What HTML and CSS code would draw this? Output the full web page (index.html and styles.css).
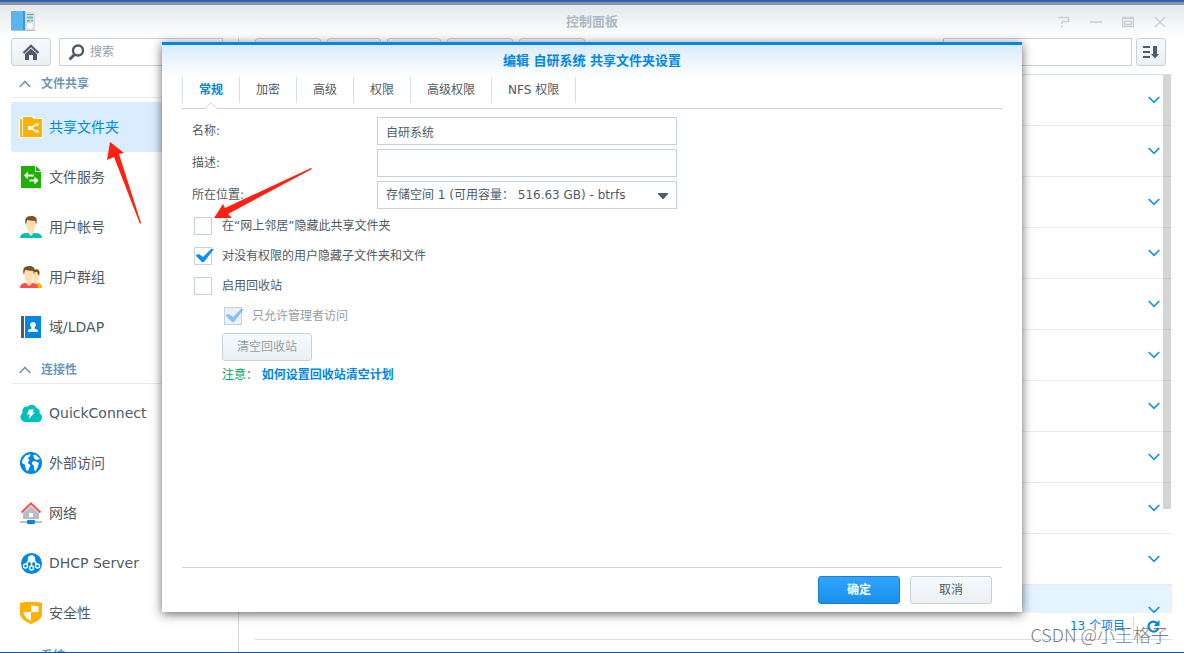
FILE: index.html
```html
<!DOCTYPE html>
<html lang="zh-CN">
<head>
<meta charset="utf-8">
<title>控制面板</title>
<link rel="stylesheet" href="styles.css">
</head>
<body>
<div class="window">
  <header class="titlebar">
    <svg class="app-icon" width="24" height="21" viewBox="0 0 24 21"><path d="M0 0h14v19H0z" fill="#5cb5ee"/><path d="M12 0h2v19h-2z" fill="#3a98e0"/><path d="M14 1h10v18H14z" fill="#d5dde3"/><path d="M0 19h24v1H1z" fill="#b4c1cc"/><path d="M2 5h1M5 5h6M2 10h1M5 10h6M2 15h1M5 15h6" stroke="#43c0ef"/><path d="M16 3.500h6" stroke="#8a98a5"/><path d="M16 6.500h6" stroke="#56c4d9" stroke-width="2"/><path d="M16 10h3" stroke="#85d536" stroke-width="2"/><path d="M20 9.500h2" stroke="#8a98a5"/><circle cx="19" cy="15" r="3" fill="#fff"/></svg>
    <h1 class="title">控制面板</h1>
    <div class="controls">
      <button class="control" aria-label="帮助"><svg width="12" height="12" viewBox="0 0 12 12"><path d="M0 1.500h10.500v4H4V8M3 10.500h2"/></svg></button>
      <button class="control" aria-label="最小化"><svg width="12" height="12" viewBox="0 0 12 12"><path d="M0 6h12"/></svg></button>
      <button class="control" aria-label="最大化"><svg width="12" height="12" viewBox="0 0 12 12"><path d="M.5 1.500h11v9H.5zM0 2.500h12M2.500 5.500h7v3h-7z"/></svg></button>
      <button class="control" aria-label="关闭"><svg width="12" height="12" viewBox="0 0 12 12"><path d="M1 1l10 10M11 1L1 11"/></svg></button>
    </div>
  </header>

  <div class="body">
    <nav class="sidebar">
      <div class="search-row">
        <button class="btn home" aria-label="主页"><svg width="18" height="17" viewBox="0 0 18 17"><path d="M1.500 9L9 1.800 16.500 9" fill="none" stroke="#4f5b69" stroke-width="2.200"/><path d="M3 10l6-5.500L15 10v6h-4v-5H7v5H3z" fill="#4f5b69"/></svg></button>
        <label class="search"><svg width="17" height="17" viewBox="0 0 17 17" fill="none" stroke="#4f5b69"><circle cx="10" cy="6.500" r="5" stroke-width="2.400"/><path d="M6.500 10.500L1.500 15.500" stroke-width="3"/></svg><input type="text" placeholder="搜索" aria-label="搜索"></label>
      </div>

      <h2 class="group"><svg width="12" height="8" viewBox="0 0 12 8"><path d="M.7 7L6 1.500 11.300 7"/></svg>文件共享</h2>
      <a class="item active" href="#"><svg width="24" height="22" viewBox="-1 0 24 22"><path d="M-1 2h3V0h11l2 2h8v20H-1z" fill="#fff"/><path d="M0 3h2v16h18v2H0z" fill="#ffb000"/><path d="M2 2h1v18H2z" fill="#fff"/><path d="M3 1h9l2 2h8v18H3z" fill="#ffb000"/><path d="M17 8.500l-7 3.500 7 3.500" fill="none" stroke="#fff" stroke-width="1.500"/><circle cx="10" cy="12" r="2.300" fill="#fff"/><circle cx="17" cy="8.500" r="1.800" fill="#fff"/><circle cx="17" cy="15.500" r="1.800" fill="#fff"/></svg>共享文件夹</a>
      <a class="item" href="#"><svg width="22" height="22" viewBox="0 0 22 22"><path d="M1 0h14v6h6v16H1z" fill="#1db100"/><path d="M16 0l5 5h-5z" fill="#1db100"/><path d="M4 9.500l4-4v3h6v2H8v3zM18.500 14.500l-4-4v3h-5v2h5v3z" fill="#fff"/></svg>文件服务</a>
      <a class="item" href="#"><svg width="22" height="22" viewBox="0 0 22 22"><path d="M0 22c0-4 4-5 7-5h8c3 0 7 1 7 5z" fill="#00bfbf"/><path d="M6.500 4h9v5c0 4-1 5-2 6v2.500L11 20l-2.500-2.500V15c-1-1-2-2-2-6z" fill="#ffdfb2"/><path d="M6 9C4 3 6 0 11 0s7 2 5 9l-.8-4C11 5 9 4 7 4z" fill="#7a5228"/></svg>用户帐号</a>
      <a class="item" href="#"><svg width="22" height="22" viewBox="0 0 22 22"><path d="M12 22v-3l7-2c2 1 3 2 3 5z" fill="#ffb000"/><path d="M14 6h5v6c0 2-1 3-2 3v3l-3-1z" fill="#ffdfb2"/><path d="M13 4c5-2 8 0 6 6l-2-4h-3z" fill="#7a5228"/><path d="M0 22c0-4 3-5 6-5h6c3 0 6 1 6 5z" fill="#ff4d4d"/><path d="M4.500 4h9v5c0 4-1 5-2 6v3L9 20l-2.500-2v-3c-1-1-2-2-2-6z" fill="#ffdfb2"/><path d="M4 9C2 3 4 0 9 0s7 2 5 9l-.8-4C9 5 7 4 5 4z" fill="#7a5228"/></svg>用户群组</a>
      <a class="item" href="#"><svg width="22" height="22" viewBox="0 0 22 22"><path d="M1 0h3v22H1z" fill="#4f5b69"/><path d="M5 0h16v22H5z" fill="#0086e5"/><path d="M8 16v-2l3.500-1.500v-1C9.500 10 9.500 6 13 6s3.500 4 1.500 5.500v1L18 14v2z" fill="#fff"/></svg>域/LDAP</a>

      <h2 class="group"><svg width="12" height="8" viewBox="0 0 12 8"><path d="M.7 7L6 1.500 11.300 7"/></svg>连接性</h2>
      <a class="item" href="#"><svg width="22" height="22" viewBox="0 0 22 22"><path d="M5 20a5 5 0 0 1-2.500-9A5 5 0 0 1 8 4.500a5 5 0 0 1 8.500 1.500 4 4 0 0 1 3 5A4.800 4.800 0 0 1 17 20z" fill="#00bfbf"/><path d="M9 7.500h5l-1.500 3H15L8.500 17l1.500-4.500H7z" fill="#fff"/></svg>QuickConnect</a>
      <a class="item" href="#"><svg width="22" height="22" viewBox="0 0 22 22"><circle cx="11" cy="11" r="11" fill="#0086e5"/><path d="M2.500 8l3-4.500 5-1.500-1 3-2 1 2 2-2 3 3 2-2.500 6-2-1-1-5-3-2zM13 3l3 0 4 4-4 1-2-2zM12 10l3-1 4 2-1 3-2 5-2-1 0-4-2-2z" fill="#fff"/></svg>外部访问</a>
      <a class="item" href="#"><svg width="22" height="22" viewBox="0 0 22 22"><path d="M3 11l8-7 8 7v6H3z" fill="#b3bfcc"/><path d="M9 11h4v4H9z" fill="#fff"/><path d="M1.500 10.500L11 1.500l9.500 9" fill="none" stroke="#ff4d4d" stroke-width="2"/><path d="M0 19h22v2H0z" fill="#b3bfcc"/><rect x="7" y="18" width="8" height="4" rx="1" fill="#0086e5"/></svg>网络</a>
      <a class="item" href="#"><svg width="22" height="22" viewBox="0 0 22 22"><circle cx="11.500" cy="11.500" r="10.500" fill="#0086e5"/><circle cx="11.500" cy="7" r="3.800" fill="#fff"/><path d="M9 8l-3 5M11.500 8v6M14 8l3 5" stroke="#fff" stroke-width="1.500"/><g fill="#0086e5" stroke="#fff" stroke-width="1.400"><circle cx="5.500" cy="14" r="2"/><circle cx="11.500" cy="16" r="2"/><circle cx="17.500" cy="14" r="2"/></g></svg>DHCP Server</a>
      <a class="item" href="#"><svg width="22" height="22" viewBox="0 0 22 22"><path d="M0 1c7-1.500 15-1.500 22 0v11c0 5-6 8-11 10C6 20 1 17 0 12z" fill="#ffb000"/><path d="M11 3.500c3 0 5 .3 7.500.7V10H11zM11 10v8.500C7 17 4 14.500 3.500 10z" fill="#fff"/></svg>安全性</a>
      <h2 class="group"><svg width="12" height="8" viewBox="0 0 12 8"><path d="M.7 7L6 1.500 11.300 7"/></svg>系统</h2>
    </nav>

    <main class="main">
      <div class="toolbar">
        <button class="btn wide" aria-label="新增"></button>
        <button class="btn" aria-label="编辑"></button>
        <button class="btn" aria-label="删除"></button>
        <button class="btn wide" aria-label="加密"></button>
        <button class="btn wide" aria-label="操作"></button>
        <input class="filter" type="text" aria-label="筛选">
        <button class="btn sort" aria-label="排序"><svg width="16" height="13" viewBox="0 0 16 13"><path d="M0 1h7M0 6h7M0 11h7" stroke="#4f5b69" stroke-width="2"/><path d="M10 0h4v8h2l-4 4.500L8 8h2z" fill="#4f5b69"/></svg></button>
      </div>
      <div class="list">
        <button class="row" aria-label="展开"><svg class="chev" width="12" height="8" viewBox="0 0 12 8"><path d="M.7 1L6 6.300 11.300 1"/></svg></button>
        <button class="row" aria-label="展开"><svg class="chev" width="12" height="8" viewBox="0 0 12 8"><path d="M.7 1L6 6.300 11.300 1"/></svg></button>
        <button class="row" aria-label="展开"><svg class="chev" width="12" height="8" viewBox="0 0 12 8"><path d="M.7 1L6 6.300 11.300 1"/></svg></button>
        <button class="row" aria-label="展开"><svg class="chev" width="12" height="8" viewBox="0 0 12 8"><path d="M.7 1L6 6.300 11.300 1"/></svg></button>
        <button class="row" aria-label="展开"><svg class="chev" width="12" height="8" viewBox="0 0 12 8"><path d="M.7 1L6 6.300 11.300 1"/></svg></button>
        <button class="row" aria-label="展开"><svg class="chev" width="12" height="8" viewBox="0 0 12 8"><path d="M.7 1L6 6.300 11.300 1"/></svg></button>
        <button class="row" aria-label="展开"><svg class="chev" width="12" height="8" viewBox="0 0 12 8"><path d="M.7 1L6 6.300 11.300 1"/></svg></button>
        <button class="row" aria-label="展开"><svg class="chev" width="12" height="8" viewBox="0 0 12 8"><path d="M.7 1L6 6.300 11.300 1"/></svg></button>
        <button class="row" aria-label="展开"><svg class="chev" width="12" height="8" viewBox="0 0 12 8"><path d="M.7 1L6 6.300 11.300 1"/></svg></button>
        <button class="row" aria-label="展开"><svg class="chev" width="12" height="8" viewBox="0 0 12 8"><path d="M.7 1L6 6.300 11.300 1"/></svg></button>
        <button class="row selected" aria-label="展开"><svg class="chev" width="12" height="8" viewBox="0 0 12 8"><path d="M.7 1L6 6.300 11.300 1"/></svg></button>
        <div class="scrollbar"></div>
      </div>
      <footer class="status">
        <span class="count">13 个项目</span>
        <button class="refresh" aria-label="刷新"><svg width="13" height="13" viewBox="0 0 13 13"><path d="M10.500 3.500A5 5 0 1 0 11.300 8" fill="none" stroke="#0086e5" stroke-width="2.200"/><path d="M12.500 0v6h-6z" fill="#0086e5"/></svg></button>
      </footer>
    </main>
  </div>
</div>

<div class="overlay">
  <form class="modal" role="dialog" aria-labelledby="modal-title">
    <h2 class="modal-title" id="modal-title">编辑 自研系统 共享文件夹设置</h2>
    <div class="tabs" role="tablist">
      <button type="button" role="tab" class="tab current">常规<svg class="notch" width="14" height="8" viewBox="0 0 14 8"><path d="M0 7L1 6.500 7 .8l6 5.700 1 .5v1H0z" fill="#fff"/><path d="M0 6.500h1L7 .8l6 5.700h1" fill="none" stroke="#cdd0d3"/></svg></button>
      <button type="button" role="tab" class="tab">加密</button>
      <button type="button" role="tab" class="tab">高级</button>
      <button type="button" role="tab" class="tab">权限</button>
      <button type="button" role="tab" class="tab">高级权限</button>
      <button type="button" role="tab" class="tab">NFS 权限</button>
    </div>
    <div class="form">
      <div class="fields">
        <label for="name">名称:</label>
        <input class="field" id="name" type="text" value="自研系统">
        <label for="desc">描述:</label>
        <input class="field" id="desc" type="text">
        <label for="place">所在位置:</label>
        <div class="select">
          <select class="field" id="place"><option>存储空间 1 (可用容量： 516.63 GB) - btrfs</option></select>
          <svg class="caret" width="10" height="6" viewBox="0 0 10 6"><path d="M0 0h10v1L5.500 6h-1L0 1z" fill="#4f5b69"/></svg>
        </div>
      </div>
      <label class="check"><input type="checkbox"><span>在“网上邻居”隐藏此共享文件夹</span></label>
      <label class="check"><input type="checkbox" checked><span>对没有权限的用户隐藏子文件夹和文件</span></label>
      <label class="check"><input type="checkbox"><span>启用回收站</span></label>
      <label class="check nested"><input type="checkbox" checked disabled><span>只允许管理者访问</span></label>
      <button class="btn empty" type="button" disabled>清空回收站</button>
      <p class="note">注意： <a href="#">如何设置回收站清空计划</a></p>
    </div>
    <div class="actions">
      <button class="btn action primary" type="button">确定</button>
      <button class="btn action" type="button">取消</button>
    </div>
  </form>
</div>

<svg class="arrow arrow-item" width="36" height="84" viewBox="0 0 36 84"><path d="M4 0L18 11l-5 1 22 69-1 1L8 15l-7 3z" fill="#ff2010"/></svg>
<svg class="arrow arrow-check" width="100" height="52" viewBox="0 0 100 52"><path d="M0 50L9 36l2 4L97 0l1 1-84 45 4 4z" fill="#ff2010"/></svg>
<div class="watermark">CSDN @小王格子</div>
</body>
</html>
```

FILE: styles.css
```css
* {
  box-sizing: border-box;
}

body {
  margin: 0;
  height: 100vh;
  position: relative;
  overflow: hidden;
  background: #fff;
  color: #505a64;
  font: 12px/18px "DejaVu Sans", "Noto Sans CJK SC", sans-serif;
}

h1,
h2,
p {
  margin: 0;
}

button,
input,
select {
  font: inherit;
  color: inherit;
}

button {
  padding: 0;
}

svg {
  display: block;
  flex: none;
}

.window {
  height: 100%;
  display: flex;
  flex-direction: column;
  border-top: 2px solid #2a62b8;
  border-bottom: 1px solid #1d4f94;
}

.titlebar {
  flex: none;
  height: 36px;
  display: grid;
  grid-template-columns: 1fr auto 1fr;
  align-items: center;
  padding: 0 11px;
  border-top: 3px solid #8b949e;
  background: linear-gradient(#e4e8ed, #fff);
}

.title {
  font-size: 13px;
  line-height: 20px;
  color: #b0b9c2;
}

.controls {
  display: flex;
  justify-content: flex-end;
  gap: 20px;
  padding-right: 7px;
}

.control {
  border: 0;
  background: none;
}

.control path {
  fill: none;
  stroke: #cbd0d5;
  stroke-width: 1.4;
}

.body {
  flex: 1;
  min-height: 0;
  display: flex;
}

.sidebar {
  width: 239px;
  flex: none;
  overflow: hidden;
  padding-left: 11px;
  border-right: 1px solid #d5d8db;
}

.search-row {
  display: flex;
  gap: 8px;
  padding-right: 15px;
}

.btn {
  width: 54px;
  height: 28px;
  flex: none;
  display: flex;
  align-items: center;
  justify-content: center;
  border: 1px solid #c6d1dc;
  border-radius: 3px;
  background: linear-gradient(#f5faff, #ebf0f5);
}

.btn.home {
  width: 40px;
}

.btn.wide {
  width: 66px;
}

.search {
  flex: 1;
  display: flex;
  align-items: center;
  gap: 5px;
  height: 28px;
  padding-left: 8px;
  border: 1px solid #c6d1dc;
}

.search input {
  min-width: 0;
  width: 100%;
  padding: 0;
  border: 0;
  background: none;
}

.search input::placeholder {
  color: #96a0ab;
}

.group {
  display: flex;
  align-items: center;
  gap: 10px;
  height: 32px;
  margin-bottom: 4px;
  padding: 5px 0 0 8px;
  border-bottom: 1px solid #e6eaed;
  font-size: 12px;
  line-height: 18px;
  color: #6e98b8;
}

.group path {
  fill: none;
  stroke: #6e98b8;
  stroke-width: 1.6;
}

.item {
  display: flex;
  align-items: center;
  gap: 7px;
  height: 50px;
  padding-left: 9px;
  border-radius: 3px 0 0 3px;
  font-size: 14px;
  color: #505a64;
  text-decoration: none;
}

.item.active {
  gap: 6px;
  padding-left: 8px;
  background: #d9edff;
  color: #0086e5;
}

.main {
  flex: 1;
  min-width: 0;
  display: flex;
  flex-direction: column;
  padding: 0 12px 12px 16px;
}

.toolbar {
  flex: none;
  display: flex;
  gap: 6px;
  height: 36px;
  padding-right: 6px;
}

.filter {
  width: 189px;
  height: 28px;
  margin-left: auto;
  margin-right: -2px;
  border: 1px solid #c6d1dc;
}

.btn.sort {
  width: 30px;
}

.list {
  flex: 1;
  min-height: 0;
  position: relative;
  overflow: hidden;
  border-top: 1px solid #d5e0ea;
}

.row {
  display: flex;
  align-items: center;
  justify-content: flex-end;
  width: 100%;
  height: 51px;
  padding-right: 12px;
  border: 0;
  border-bottom: 1px solid #e8ecf0;
  background: #fff;
}

.row.selected {
  background: #e6f4ff;
}

.chev path {
  fill: none;
  stroke: #1791ea;
  stroke-width: 1.7;
}

.scrollbar {
  position: absolute;
  top: 0;
  right: 1px;
  width: 8px;
  height: 434px;
  background: rgba(60, 65, 75, 0.22);
}

.status {
  flex: none;
  display: flex;
  align-items: center;
  justify-content: flex-end;
  height: 27px;
  padding-right: 12px;
  border-bottom: 1px solid #d5e0ea;
  color: #0086e5;
}

.count {
  padding-right: 8px;
  border-right: 1px solid #d5e0ea;
}

.refresh {
  margin-left: 13px;
  border: 0;
  background: none;
}

.overlay {
  position: absolute;
  inset: 0;
  display: flex;
  justify-content: center;
  padding: 42px 16px 41px;
}

.modal {
  width: 860px;
  display: flex;
  flex-direction: column;
  padding: 0 20px;
  border-top: 3px solid #0086e5;
  background: linear-gradient(#d9ebfa, #fff 32px);
  box-shadow: 0 2px 10px rgba(0, 0, 0, 0.6);
}

.modal-title {
  height: 32px;
  font-size: 13px;
  line-height: 32px;
  text-align: center;
  color: #0086e5;
}

.tabs {
  display: flex;
  height: 32px;
  padding-bottom: 5px;
  border-bottom: 1px solid #cfd2d5;
}

.tab {
  position: relative;
  padding: 0 16px;
  border: 0;
  border-left: 1px solid #d5e0ea;
  background: none;
}

.tab:last-child {
  border-right: 1px solid #d5e0ea;
}

.tab.current {
  color: #0086e5;
  font-weight: bold;
}

.notch {
  position: absolute;
  left: 21px;
  bottom: -7px;
}

.form {
  flex: 1;
  display: flex;
  flex-direction: column;
  align-items: flex-start;
  padding: 8px 10px;
}

.fields {
  display: grid;
  grid-template-columns: 185px 300px;
  row-gap: 4px;
  align-items: center;
  margin-bottom: 2px;
}

.field {
  width: 100%;
  height: 28px;
  padding: 0 8px;
  border: 1px solid #c6d1dc;
  border-radius: 0;
  background: #fff;
  appearance: none;
}

.select {
  position: relative;
}

.caret {
  position: absolute;
  right: 9px;
  top: 12px;
  pointer-events: none;
}

.check {
  display: flex;
  align-items: center;
  gap: 10px;
  height: 30px;
  padding-left: 2px;
}

.check.nested {
  padding-left: 32px;
}

.check input {
  position: relative;
  width: 18px;
  height: 18px;
  margin: 0;
  border: 1px solid #c6d1dc;
  background: #fff;
  appearance: none;
}

.check input:checked::before {
  content: "";
  position: absolute;
  left: -1px;
  top: -1px;
  width: 20px;
  height: 18px;
  background: #0e8ef0;
  clip-path: polygon(2px 8px, 5px 7px, 9px 10px, 17px 2px, 20px 2px, 10px 15px, 8px 15px, 2px 9px);
}

.check input:disabled {
  background: #ebf0f4;
}

.check input:disabled::before {
  opacity: 0.45;
}

.check input:disabled + span {
  color: #969da5;
}

.btn.empty {
  width: 90px;
  margin: 2px 0 0 30px;
  color: #969da5;
}

.note {
  margin-left: 30px;
  line-height: 28px;
  color: #00a35c;
}

.note a {
  font-weight: bold;
  color: #0086e5;
  text-decoration: none;
}

.actions {
  display: flex;
  justify-content: flex-end;
  gap: 10px;
  padding: 8px 10px;
  border-top: 1px solid #d5d8db;
}

.btn.action {
  width: 82px;
}

.btn.primary {
  border-color: #1580d4;
  background: linear-gradient(#30a5ff, #1890ea);
  color: #fff;
  font-weight: bold;
}

.arrow {
  position: absolute;
  pointer-events: none;
}

.arrow-item {
  left: 106px;
  top: 142px;
}

.arrow-check {
  left: 214px;
  top: 168px;
}

.watermark {
  position: absolute;
  right: 15px;
  bottom: 6px;
  font: 18px/26px "Noto Sans CJK SC", sans-serif;
  font-weight: 300;
  color: rgba(80, 80, 80, 0.75);
  pointer-events: none;
}
```
